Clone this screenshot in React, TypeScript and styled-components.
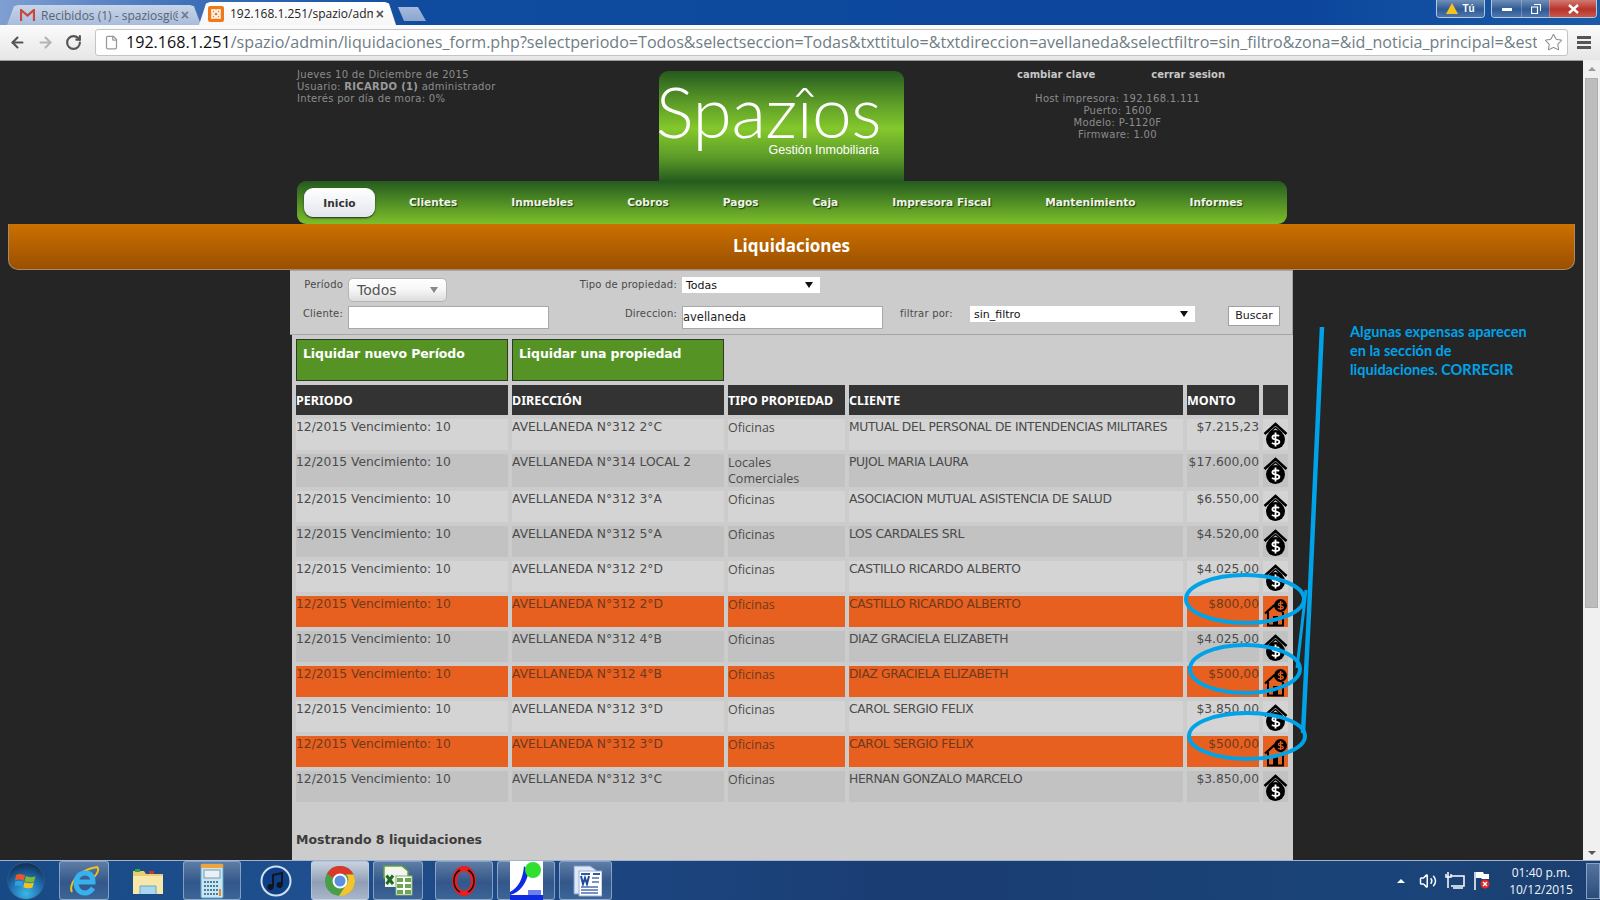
import React from "react";
import styled, { createGlobalStyle } from "styled-components";
import { ArrowLeft, ArrowRight, RotateCw, Star, File, Volume2 } from "lucide-react";

const Global = createGlobalStyle`
  html, body { margin: 0; padding: 0; background: #252525; }
  * { box-sizing: border-box; }
`;

const Screen = styled.div`
  position: relative;
  width: 1600px;
  height: 900px;
  overflow: hidden;
  display: flex;
  flex-direction: column;
  font-family: "DejaVu Sans", sans-serif;
`;

/* ---------- browser chrome ---------- */
const TabStrip = styled.div`
  height: 25px;
  flex: none;
  display: flex;
  align-items: flex-end;
  padding-left: 7px;
  background: linear-gradient(90deg, #7f9fd2 0, #3f70b8 190px, #0f4b9f 420px, #0b469c 1300px, #1a5aa8 100%);
`;
const Tab = styled.div<{ $active?: boolean }>`
  height: ${(p) => (p.$active ? 23 : 20)}px;
  width: ${(p) => (p.$active ? 197 : 194)}px;
  margin-right: ${(p) => (p.$active ? 2 : -2)}px;
  padding: 0 12px 0 ${(p) => (p.$active ? 9 : 13)}px;
  display: flex;
  align-items: center;
  gap: 3px;
  font: 12px "Open Sans", sans-serif;
  color: ${(p) => (p.$active ? "#222" : "#5a6470")};
  background: ${(p) => (p.$active ? "linear-gradient(#ffffff,#f6f6f6)" : "linear-gradient(#c8d5ea,#a9bcdb)")};
  clip-path: polygon(0 100%, 7px 6%, 11px 0, calc(100% - 11px) 0, calc(100% - 7px) 6%, 100% 100%);
`;
const TabTitle = styled.span`
  flex: 1;
  white-space: nowrap;
  overflow: hidden;
  margin-left: 3px;
`;
const TabClose = styled.span<{ $active?: boolean }>`
  font: bold 14px "Liberation Sans", sans-serif;
  color: ${(p) => (p.$active ? "#555" : "#6f7a8a")};
`;
const NewTab = styled.div`
  width: 28px;
  height: 14px;
  margin: 0 0 4px 0;
  background: linear-gradient(#a6bbdc, #8ba6cf);
  clip-path: polygon(0 0, 20px 0, 100% 100%, 6px 100%);
`;
const Spacer = styled.div`
  flex: 1;
`;
const WinGroup = styled.div`
  align-self: flex-start;
  height: 18px;
  display: flex;
  border: 1px solid #b8c8dc;
  border-top: 0;
  border-radius: 0 0 4px 4px;
  overflow: hidden;
  margin-right: ${(p: { $mr: number }) => p.$mr}px;
`;
const WinBtn = styled.div<{ $w: number; $close?: boolean }>`
  width: ${(p) => p.$w}px;
  display: flex;
  align-items: center;
  justify-content: center;
  gap: 4px;
  color: #fff;
  font: bold 10px "Liberation Sans", sans-serif;
  background: ${(p) =>
    p.$close ? "linear-gradient(#d27a72,#b8332a 55%,#c9584f)" : "linear-gradient(#6f8fb8,#2f5a95 55%,#4c78ad)"};
  border-left: 1px solid rgba(255, 255, 255, 0.25);
  &:first-child { border-left: 0; }
`;
const Toolbar = styled.div`
  height: 35px;
  flex: none;
  display: flex;
  align-items: center;
  background: linear-gradient(#fbfbfb, #e6e6e6);
  padding: 0 0 1px 9px;
`;
const NavIcons = styled.div`
  display: flex;
  align-items: center;
  gap: 11px;
  width: 86px;
  flex: none;
`;
const Omnibox = styled.div`
  width: 1473px;
  height: 27px;
  display: flex;
  align-items: center;
  gap: 7px;
  padding: 0 4px 0 8px;
  background: #fff;
  border: 1px solid #c4c4c4;
  border-radius: 3px;
`;
const Url = styled.div`
  flex: 1;
  font: 16.1px "Open Sans", sans-serif;
  color: #6f7d85;
  white-space: nowrap;
  overflow: hidden;
`;
const UrlHost = styled.span`
  color: #111;
`;
const Hamburger = styled.div`
  margin-left: 9px;
  width: 14px;
  display: flex;
  flex-direction: column;
  gap: 2px;
  & > i { display: block; height: 3px; background: #555; }
`;

/* ---------- viewport ---------- */
const Viewport = styled.div`
  flex: 1;
  min-height: 0;
  display: flex;
`;
const Page = styled.div`
  flex: 1;
  min-width: 0;
  background: #252525;
  border-top: 1px solid #9c9c9c;
  display: flex;
  flex-direction: column;
`;
const Scrollbar = styled.div`
  width: 17px;
  flex: none;
  background: #f0f0f0;
  display: flex;
  flex-direction: column;
  align-items: center;
  padding-top: 7px;
`;
const ScrollThumb = styled.div`
  width: 13px;
  height: 530px;
  margin-top: 7px;
  background: #bdbdbd;
  border: 1px solid #aeaeae;
`;
const ScrollArrow = styled.div<{ $down?: boolean }>`
  width: 0;
  height: 0;
  border-left: 4px solid transparent;
  border-right: 4px solid transparent;
  ${(p) => (p.$down ? "border-top: 4px solid #555; margin-top: auto; margin-bottom: 5px;" : "border-bottom: 4px solid #999;")}
`;

const Header = styled.div`
  height: 120px;
  flex: none;
  margin-left: 297px;
  width: 990px;
  display: flex;
`;
const InfoLeft = styled.div`
  width: 362px;
  padding-top: 8px;
  font-size: 10px;
  line-height: 12px;
  letter-spacing: 0.3px;
  color: #8c8c8c;
  & b { color: #9a9a9a; }
`;
const Logo = styled.div`
  width: 245px;
  height: 111px;
  margin-top: 10px;
  border-radius: 9px 9px 0 0;
  background: linear-gradient(#245a1e 0, #5c9a28 28%, #84c82c 52%, #5c9a28 78%, #245a1e 100%);
  color: #fff;
  display: flex;
  flex-direction: column;
  align-items: flex-end;
  padding: 9px 25px 0 0;
`;
const LogoName = styled.div`
  font: 300 70px/62px Lato, sans-serif;
  letter-spacing: -0.5px;
  transform: scaleX(1.02);
`;
const LogoSub = styled.div`
  font: 12.5px/14px "Liberation Sans", sans-serif;
  margin-top: 1px;
`;
const InfoRight = styled.div`
  flex: 1;
  padding: 8px 0 0 44px;
  font-size: 10px;
  line-height: 12px;
  letter-spacing: 0.3px;
  color: #8c8c8c;
  text-align: center;
`;
const HeadLinks = styled.div`
  display: flex;
  justify-content: center;
  gap: 56px;
  margin: 0 0 12px 7px;
  font-weight: 700;
  color: #c8c8c8;
  letter-spacing: 0;
`;
const Nav = styled.div`
  height: 43px;
  flex: none;
  width: 990px;
  margin-left: 297px;
  padding: 7px 0 0 7px;
  display: flex;
  align-items: flex-start;
  gap: 54px;
  border-radius: 9px 9px 9px 9px;
  background: linear-gradient(#245a1e 0, #5a9826 60%, #7cbf2a 100%);
`;
const NavItem = styled.div<{ $active?: boolean }>`
  font-size: 10.6px;
  font-weight: 700;
  white-space: nowrap;
  color: ${(p) => (p.$active ? "#333" : "#eef3e6")};
  text-shadow: ${(p) => (p.$active ? "none" : "1px 1px 1px #1c3a12")};
  ${(p) =>
    p.$active
      ? `width: 71px; height: 29px; margin-right: -20px; line-height: 30px; text-align: center; border-radius: 9px;
         background: linear-gradient(#fff,#e3e6ee); box-shadow: 0 1px 2px #222;`
      : "padding-top: 8px;"}
`;
const TitleBar = styled.div`
  height: 46px;
  flex: none;
  margin: 0 8px;
  display: flex;
  align-items: center;
  justify-content: center;
  padding-bottom: 3px;
  border-radius: 0 0 10px 10px;
  border: 1px solid #a98a62;
  border-top: 0;
  background: linear-gradient(#cc7000, #9a5000);
  color: #fff;
  font: 700 17px "Open Sans", sans-serif;
`;
const FormPanel = styled.div`
  height: 65px;
  flex: none;
  width: 1003px;
  margin-left: 290px;
  padding-top: 6px;
  display: grid;
  grid-template-columns: 58px 212px 122px 218px 70px 258px 52px;
  grid-template-rows: 29px 26px;
  background: #cccccc;
  border: 1px solid #a5a5a5;
  border-width: 1px 1px 1px 0;
`;
const FieldLabel = styled.div<{ $left?: boolean }>`
  font-size: 10px;
  color: #4a4a4a;
  letter-spacing: 0.2px;
  text-align: ${(p) => (p.$left ? "left" : "right")};
  padding-right: 5px;
  padding-top: 2px;
  white-space: nowrap;
`;
const PeriodSelect = styled.div`
  width: 99px;
  height: 24px;
  margin-top: 1px;
  padding: 0 8px;
  display: flex;
  align-items: center;
  justify-content: space-between;
  font-size: 14px;
  color: #555;
  border-radius: 5px;
  border: 1px solid #b5b5b5;
  background: linear-gradient(#ffffff, #f6f6f6 50%, #dcdcdc);
`;
const Caret = styled.span<{ $color: string }>`
  width: 0;
  height: 0;
  border-left: 4px solid transparent;
  border-right: 4px solid transparent;
  border-top: 6px solid ${(p) => p.$color};
`;
const WhiteSelect = styled.div<{ $w: number }>`
  width: ${(p) => p.$w}px;
  height: 16px;
  padding: 0 7px 0 4px;
  display: flex;
  align-items: center;
  justify-content: space-between;
  font: 11px "DejaVu Sans", sans-serif;
  color: #111;
  background: #fff;
`;
const TextField = styled.div<{ $w: number }>`
  width: ${(p) => p.$w}px;
  height: 23px;
  padding: 3px 0 0 0;
  background: #fff;
  border: 1px solid #a8a8a8;
  font-size: 11.5px;
  color: #222;
`;
const SearchBtn = styled.div`
  width: 52px;
  height: 20px;
  background: #fff;
  border: 1px solid #a0a0a0;
  font: 11px/18px "DejaVu Sans", sans-serif;
  color: #222;
  text-align: center;
`;
const Content = styled.div`
  flex: 1;
  width: 1001px;
  margin-left: 292px;
  background: #cccccc;
  padding-top: 4px;
`;
const ActionRow = styled.div`
  display: flex;
  gap: 4px;
  padding-left: 4px;
`;
const ActionBtn = styled.div`
  width: 212px;
  height: 42px;
  padding: 6px 0 0 6px;
  background: #559325;
  border: 1px solid #2e3a28;
  color: #fff;
  font-size: 12.5px;
  font-weight: 700;
  letter-spacing: -0.1px;
`;
const Table = styled.table`
  width: 1000px;
  table-layout: fixed;
  border-collapse: separate;
  border-spacing: 4px;
`;
const Th = styled.th<{ $w: number }>`
  width: ${(p) => p.$w}px;
  height: 30px;
  padding: 0;
  text-align: left;
  background: #333;
  color: #fff;
  font: 700 12.5px "Noto Sans", sans-serif;
`;
const Td = styled.td<{ $tone: "a" | "b" | "o"; $right?: boolean }>`
  height: 30px;
  padding: 1px 0 0 0;
  vertical-align: top;
  overflow: visible;
  background: ${(p) => (p.$tone === "o" ? "#e8601f" : p.$tone === "a" ? "#d4d4d4" : "#c2c2c2")};
  color: ${(p) => (p.$tone === "o" ? "#6e3a1e" : "#4b4b4b")};
  font-size: 12.3px;
  line-height: 15px;
  text-align: ${(p) => (p.$right ? "right" : "left")};
  white-space: ${(p) => (p.$right ? "nowrap" : "normal")};
`;
const CellText = styled.span<{ $narrow?: boolean }>`
  letter-spacing: ${(p) => (p.$narrow ? "-0.35px" : "0")};
  white-space: ${(p) => (p.$narrow ? "nowrap" : "normal")};
`;
const TipoText = styled.span`
  font-family: "Open Sans", sans-serif;
  font-size: 12.5px;
`;
const IconWrap = styled.div`
  display: block;
  width: 25px;
  height: 30px;
  position: relative;
`;
const Footer = styled.div`
  margin: 26px 0 0 4px;
  font-size: 12.5px;
  font-weight: 700;
  color: #3c3c3c;
`;
const Note = styled.div`
  position: absolute;
  left: 1350px;
  top: 322px;
  width: 210px;
  font: 700 14.5px/19px Lato, sans-serif;
  color: #00a2e8;
`;
const Overlay = styled.svg`
  position: absolute;
  left: 0;
  top: 0;
  pointer-events: none;
`;

/* ---------- taskbar ---------- */
const Taskbar = styled.div`
  height: 40px;
  flex: none;
  display: flex;
  align-items: stretch;
  padding-left: 4px;
  border-top: 1px solid #9fb4d0;
  background: linear-gradient(90deg, #174a85 0, #1f4f8e 300px, #1a3d73 900px, #1a4479 1400px, #1c3f70 100%);
`;
const Orb = styled.div`
  width: 38px;
  height: 38px;
  margin: 1px 14px 0 3px;
  border-radius: 50%;
  background: radial-gradient(circle at 50% 85%, #39b6e8, #1f6fb0 45%, #12355f 80%);
  border: 1px solid #33557f;
  display: flex;
  align-items: center;
  justify-content: center;
`;
const TaskBtn = styled.div<{ $w: number; $plain?: boolean; $hot?: boolean; $gap?: number }>`
  width: ${(p) => p.$w}px;
  margin-right: ${(p) => p.$gap ?? 4}px;
  display: flex;
  align-items: center;
  justify-content: center;
  border-radius: 3px;
  ${(p) =>
    p.$plain
      ? ""
      : `border: 1px solid rgba(190,210,235,.55);
         background: linear-gradient(${p.$hot ? "#c9d3df,#8f9fb5 55%,#aab6c8" : "#5f7da5,#33578a 55%,#3c6598"});`}
`;
const Tray = styled.div`
  margin-left: auto;
  display: flex;
  align-items: center;
  color: #fff;
`;
const TrayCaret = styled.span`
  width: 0;
  height: 0;
  margin-right: 14px;
  border-left: 4px solid transparent;
  border-right: 4px solid transparent;
  border-bottom: 4px solid #fff;
`;
const TrayIcons = styled.div`
  display: flex;
  align-items: center;
  gap: 8px;
`;
const Clock = styled.div`
  width: 72px;
  margin-left: 14px;
  text-align: center;
  font: 12px/17px "Open Sans", sans-serif;
  color: #f2f5fa;
`;
const ShowDesktop = styled.div`
  width: 14px;
  height: 36px;
  margin-left: 9px;
  border: 1px solid #8aa2c2;
  background: linear-gradient(#54749e, #2c4d7c);
`;

/* ---------- drawings ---------- */
const DollarHouse = () => (
  <svg width="25" height="34" viewBox="0 0 25 34" style={{ position: "absolute", left: 0, top: 1 }}>
    <path d="M1.5 13 12.5 3 23.5 13" fill="none" stroke="#000" strokeWidth="2.6" />
    <path d="M6 12 12.5 6.5 19 12" fill="none" stroke="#000" strokeWidth="1.4" />
    <circle cx="12.5" cy="18.5" r="9.5" fill="#000" />
    <path d="M16 15.2c-1-1.4-6.6-1.7-6.6 1.2 0 3 7 1.4 7 4.4 0 2.9-6 2.7-7.4 1M12.5 11.5v14" fill="none" stroke="#fff" strokeWidth="1.8" />
  </svg>
);
const CoinHouse = () => (
  <svg width="25" height="30" viewBox="0 0 25 30" style={{ position: "absolute", left: 0, top: 1 }}>
    <path d="M2 15.5 11 7.5 19 14" fill="none" stroke="#000" strokeWidth="2.2" />
    <path d="M5 14v13.5h15V14" fill="none" stroke="#000" strokeWidth="2" />
    <rect x="10" y="18" width="5" height="9.5" fill="#000" />
    <circle cx="17.5" cy="7.5" r="6.5" fill="#000" />
    <path d="M20 5.6c-.8-1-4.6-1.1-4.6.8 0 2 4.9.9 4.9 3 0 1.9-4.2 1.8-5.2.7M17.6 3v9" fill="none" stroke="#e8601f" strokeWidth="1.3" />
  </svg>
);
const GmailIcon = () => (
  <svg width="15" height="12" viewBox="0 0 15 12">
    <path d="M1 12V1l6.5 5.5L14 1v11" fill="none" stroke="#c9463a" strokeWidth="2.2" />
  </svg>
);
const XamppIcon = () => (
  <svg width="16" height="16" viewBox="0 0 16 16">
    <rect width="16" height="16" rx="2" fill="#ee7a1c" />
    <path d="M4 4h3v2h2V4h3v3h-2v2h2v3H9v-2H7v2H4V9h2V7H4z" fill="none" stroke="#fff" strokeWidth="1.5" />
  </svg>
);
const WinFlag = () => (
  <svg width="22" height="20" viewBox="0 0 22 20">
    <path d="M1 4c3-1.5 5-1.2 9 .5l-1.4 5.3C5 8.3 3 8 0 9.4z" fill="#e8562a" />
    <path d="M11 5c3.5 1.6 6 1.6 9.5.2l-1.4 5.2c-3.4 1.3-6 1.2-9.5-.2z" fill="#7fbb2e" />
    <path d="M8.300 10.800c-3.500-1.400-5.500-1.500-8.300-.2L-1 15.500c3-1.300 5-1.200 8 .2z" fill="#2f9fe0" />
    <path d="M9.500 11.200c3.500 1.400 6 1.500 9.300.2l-1.300 5c-3.300 1.300-5.800 1.200-9.300-.2z" fill="#f6c120" />
  </svg>
);
const IeIcon = () => (
  <svg width="34" height="34" viewBox="0 0 34 34">
    <path d="M5 28C1 22 10 6 30 3c3 3-1 8-3 10" fill="none" stroke="#f2c21c" strokeWidth="2" />
    <path d="M9 18h17c0-6-3-9-8-9s-9 4-9 10 4 10 9 10c4 0 6-2 8-5" fill="none" stroke="#38b2ee" strokeWidth="5" />
  </svg>
);
const FolderIcon = () => (
  <svg width="34" height="34" viewBox="0 0 34 34">
    <path d="M2 7h11l2 3h17v20H2z" fill="#e9cd74" />
    <path d="M2 12h30v18H2z" fill="#f7e7a8" />
    <rect x="4" y="5" width="5" height="3" fill="#36a83a" />
    <rect x="18" y="7" width="5" height="3" fill="#c8372b" />
    <path d="M9 30v-8h16v8" fill="#a9d8ee" stroke="#6aa7c7" />
  </svg>
);
const CalcIcon = () => (
  <svg width="24" height="36" viewBox="0 0 24 36">
    <rect x="1" y="1" width="22" height="34" rx="1.500" fill="#c9e6f5" stroke="#5aa4cb" />
    <rect x="1" y="1" width="22" height="4" fill="#f0a33a" />
    <rect x="4" y="7" width="16" height="8" fill="#e8f1f6" stroke="#7d97a8" />
    <path d="M4 19h14M4 23h14M4 27h14M4 31h14" stroke="#4e7d98" strokeWidth="2" strokeDasharray="2 1" />
    <rect x="19" y="26" width="2" height="7" fill="#e98b22" />
  </svg>
);
const ItunesIcon = () => (
  <svg width="32" height="32" viewBox="0 0 32 32">
    <circle cx="16" cy="16" r="14.500" fill="#0f3f86" stroke="#cfe0f2" strokeWidth="2" />
    <path d="M13 22V10l9-2v12" fill="none" stroke="#10151f" strokeWidth="2" />
    <circle cx="10.500" cy="22" r="3" fill="#10151f" />
    <circle cx="19.500" cy="20" r="3" fill="#10151f" />
  </svg>
);
const ChromeIcon = () => (
  <svg width="32" height="32" viewBox="0 0 32 32">
    <circle cx="16" cy="16" r="15" fill="#4a9e4a" />
    <path d="M3 8.500A15 15 0 0 1 29.500 9.500H16A7 7 0 0 0 9.500 13z" fill="#d8392c" />
    <path d="M29.500 9.500A15 15 0 0 1 15 31l7-11a7 7 0 0 0 0-10.500z" fill="#f4c430" />
    <circle cx="16" cy="16" r="7.500" fill="#fff" />
    <circle cx="16" cy="16" r="5.500" fill="#5b8fe0" />
  </svg>
);
const ExcelIcon = () => (
  <svg width="32" height="32" viewBox="0 0 32 32">
    <path d="M2 1h18l6 5v7H2z" fill="#f4f7f0" stroke="#5fa53a" strokeWidth="1.500" />
    <path d="M3 9h11v13H3z" fill="#eef3e8" />
    <path d="M4.500 10.500 11 19M11 10.500 4.500 19" stroke="#1e6a24" strokeWidth="3" />
    <rect x="14" y="11" width="16" height="19" fill="#fff" stroke="#87ab77" />
    <path d="M15 13h6v4h-6zM23 13h6v4h-6zM15 19h6v4h-6zM23 19h6v4h-6zM15 25h6v4h-6zM23 25h6v4h-6z" fill="#6aa84f" />
  </svg>
);
const OperaIcon = () => (
  <svg width="26" height="32" viewBox="0 0 26 32">
    <ellipse cx="13" cy="16" rx="9.500" ry="12.500" fill="none" stroke="#ee1c1c" strokeWidth="5" />
    <path d="M17 5c4 2 6 6 6 11s-2 9-6 11" fill="none" stroke="#111" strokeWidth="1.500" />
    <path d="M9 5C5 7 3 11 3 16s2 9 6 11" fill="none" stroke="#111" strokeWidth="1.500" />
  </svg>
);
const AppIcon = () => (
  <svg width="33" height="40" viewBox="0 0 33 40">
    <rect width="33" height="39" fill="#fff" />
    <path d="M14 5C13 18 8 27 0 31v3c10-2 17-13 19-24z" fill="#0d2be0" />
    <circle cx="23" cy="9" r="8" fill="#2fe02f" />
    <rect x="0" y="34" width="33" height="5" fill="#0d2be0" />
    <rect x="18" y="29" width="13" height="5" fill="#0d2be0" opacity="0.6" />
  </svg>
);
const WordIcon = () => (
  <svg width="32" height="32" viewBox="0 0 32 32">
    <path d="M4 1h16l6 4v24H4z" fill="#dfe8f6" stroke="#7b9bd0" />
    <path d="M9 6h23v25H9z" fill="#fff" stroke="#9aaed0" />
    <path d="M11 9h9M23 9h7" stroke="#2f5aa8" strokeWidth="2" />
    <path d="M11 11l2 8 2-6 2 6 2-8" fill="none" stroke="#1c4a9c" strokeWidth="2" />
    <path d="M11 22h17M11 25h17M11 28h17M22 13h7M22 17h7" stroke="#4a6fb5" strokeWidth="1.500" />
  </svg>
);
const NetIcon = () => (
  <svg width="20" height="18" viewBox="0 0 20 18">
    <path d="M6 4h13v10H6M3 0v8M1 2v3h5V2M3 8v8M8 16h10" fill="none" stroke="#fff" strokeWidth="1.500" />
  </svg>
);
const FlagIcon = () => (
  <svg width="18" height="20" viewBox="0 0 18 20">
    <path d="M2 1v18" stroke="#fff" strokeWidth="1.500" />
    <path d="M3 1h7l1 2h5v5H9L8 7H3z" fill="#fff" />
    <circle cx="12" cy="13" r="4.500" fill="#e02828" />
    <path d="M10 11l4 4M14 11l-4 4" stroke="#fff" strokeWidth="1.300" />
  </svg>
);

type Row = { dir: string; tipo: string; cli: string; monto: string; tone: "a" | "b" | "o" };
const rows: Row[] = [
  { dir: "AVELLANEDA N°312 2°C", tipo: "Oficinas", cli: "MUTUAL DEL PERSONAL DE INTENDENCIAS MILITARES", monto: "$7.215,23", tone: "a" },
  { dir: "AVELLANEDA N°314 LOCAL 2", tipo: "Locales Comerciales", cli: "PUJOL MARIA LAURA", monto: "$17.600,00", tone: "b" },
  { dir: "AVELLANEDA N°312 3°A", tipo: "Oficinas", cli: "ASOCIACION MUTUAL ASISTENCIA DE SALUD", monto: "$6.550,00", tone: "a" },
  { dir: "AVELLANEDA N°312 5°A", tipo: "Oficinas", cli: "LOS CARDALES SRL", monto: "$4.520,00", tone: "b" },
  { dir: "AVELLANEDA N°312 2°D", tipo: "Oficinas", cli: "CASTILLO RICARDO ALBERTO", monto: "$4.025,00", tone: "a" },
  { dir: "AVELLANEDA N°312 2°D", tipo: "Oficinas", cli: "CASTILLO RICARDO ALBERTO", monto: "$800,00", tone: "o" },
  { dir: "AVELLANEDA N°312 4°B", tipo: "Oficinas", cli: "DIAZ GRACIELA ELIZABETH", monto: "$4.025,00", tone: "b" },
  { dir: "AVELLANEDA N°312 4°B", tipo: "Oficinas", cli: "DIAZ GRACIELA ELIZABETH", monto: "$500,00", tone: "o" },
  { dir: "AVELLANEDA N°312 3°D", tipo: "Oficinas", cli: "CAROL SERGIO FELIX", monto: "$3.850,00", tone: "a" },
  { dir: "AVELLANEDA N°312 3°D", tipo: "Oficinas", cli: "CAROL SERGIO FELIX", monto: "$500,00", tone: "o" },
  { dir: "AVELLANEDA N°312 3°C", tipo: "Oficinas", cli: "HERNAN GONZALO MARCELO", monto: "$3.850,00", tone: "b" },
];
const navItems = ["Clientes", "Inmuebles", "Cobros", "Pagos", "Caja", "Impresora Fiscal", "Mantenimiento", "Informes"];

export default function App() {
  return (
    <Screen>
      <Global />
      <TabStrip>
        <Tab>
          <GmailIcon />
          <TabTitle>Recibidos (1) - spaziosgi@</TabTitle>
          <TabClose>×</TabClose>
        </Tab>
        <Tab $active>
          <XamppIcon />
          <TabTitle>192.168.1.251/spazio/adm</TabTitle>
          <TabClose $active>×</TabClose>
        </Tab>
        <NewTab />
        <Spacer />
        <WinGroup $mr={6}>
          <WinBtn $w={47}>
            <svg width="12" height="11" viewBox="0 0 12 11"><path d="M6 0l6 11H0z" fill="#f7c21b" /></svg>
            Tú
          </WinBtn>
        </WinGroup>
        <WinGroup $mr={3}>
          <WinBtn $w={29}><svg width="10" height="4"><rect width="10" height="3" y="1" fill="#fff" /></svg></WinBtn>
          <WinBtn $w={28}><svg width="10" height="10"><path d="M3 .5h6.500V7M.5 3h6v6.500h-6z" fill="none" stroke="#fff" strokeWidth="1.200" /></svg></WinBtn>
          <WinBtn $w={47} $close>
            <svg width="11" height="10"><path d="M1 1l9 8M10 1l-9 8" stroke="#fff" strokeWidth="2.400" /></svg>
          </WinBtn>
        </WinGroup>
      </TabStrip>
      <Toolbar>
        <NavIcons>
          <ArrowLeft size={17} color="#555" strokeWidth={3} />
          <ArrowRight size={17} color="#b4b4b4" strokeWidth={3} />
          <RotateCw size={17} color="#555" strokeWidth={3} />
        </NavIcons>
        <Omnibox>
          <File size={15} color="#999" />
          <Url>
            <UrlHost>192.168.1.251</UrlHost>
            /spazio/admin/liquidaciones_form.php?selectperiodo=Todos&amp;selectseccion=Todas&amp;txttitulo=&amp;txtdireccion=avellaneda&amp;selectfiltro=sin_filtro&amp;zona=&amp;id_noticia_principal=&amp;estilo=
          </Url>
          <Star size={19} color="#8a8a8a" strokeWidth={1.3} />
        </Omnibox>
        <Hamburger><i /><i /><i /></Hamburger>
      </Toolbar>
      <Viewport>
        <Page>
          <Header>
            <InfoLeft>
              Jueves 10 de Diciembre de 2015
              <br />
              Usuario: <b>RICARDO (1)</b> administrador
              <br />
              Interés por día de mora: 0%
            </InfoLeft>
            <Logo>
              <LogoName>Spazîos</LogoName>
              <LogoSub>Gestión Inmobiliaria</LogoSub>
            </Logo>
            <InfoRight>
              <HeadLinks>
                <span>cambiar clave</span>
                <span>cerrar sesion</span>
              </HeadLinks>
              Host impresora: 192.168.1.111
              <br />
              Puerto: 1600
              <br />
              Modelo: P-1120F
              <br />
              Firmware: 1.00
            </InfoRight>
          </Header>
          <Nav>
            <NavItem $active>Inicio</NavItem>
            {navItems.map((n) => (
              <NavItem key={n}>{n}</NavItem>
            ))}
          </Nav>
          <TitleBar>Liquidaciones</TitleBar>
          <FormPanel>
            <FieldLabel>Período</FieldLabel>
            <PeriodSelect>Todos<Caret $color="#888" /></PeriodSelect>
            <FieldLabel>Tipo de propiedad:</FieldLabel>
            <WhiteSelect $w={138}>Todas<Caret $color="#111" /></WhiteSelect>
            <div />
            <div />
            <div />
            <FieldLabel>Cliente:</FieldLabel>
            <TextField $w={201} />
            <FieldLabel>Direccion:</FieldLabel>
            <TextField $w={201}>avellaneda</TextField>
            <FieldLabel $left>filtrar por:</FieldLabel>
            <WhiteSelect $w={225}>sin_filtro<Caret $color="#111" /></WhiteSelect>
            <SearchBtn>Buscar</SearchBtn>
          </FormPanel>
          <Content>
            <ActionRow>
              <ActionBtn>Liquidar nuevo Período</ActionBtn>
              <ActionBtn>Liquidar una propiedad</ActionBtn>
            </ActionRow>
            <Table>
              <thead>
                <tr>
                  <Th $w={212}>PERIODO</Th>
                  <Th $w={212}>DIRECCIÓN</Th>
                  <Th $w={117}>TIPO PROPIEDAD</Th>
                  <Th $w={334}>CLIENTE</Th>
                  <Th $w={72}>MONTO</Th>
                  <Th $w={25}></Th>
                </tr>
              </thead>
              <tbody>
                {rows.map((r, i) => (
                  <tr key={i}>
                    <Td $tone={r.tone}>12/2015 Vencimiento: 10</Td>
                    <Td $tone={r.tone}>{r.dir}</Td>
                    <Td $tone={r.tone}><TipoText>{r.tipo}</TipoText></Td>
                    <Td $tone={r.tone}><CellText $narrow>{r.cli}</CellText></Td>
                    <Td $tone={r.tone} $right>{r.monto}</Td>
                    <Td $tone={r.tone}>
                      <IconWrap>{r.tone === "o" ? <CoinHouse /> : <DollarHouse />}</IconWrap>
                    </Td>
                  </tr>
                ))}
              </tbody>
            </Table>
            <Footer>Mostrando 8 liquidaciones</Footer>
          </Content>
        </Page>
        <Scrollbar>
          <ScrollArrow />
          <ScrollThumb />
          <ScrollArrow $down />
        </Scrollbar>
      </Viewport>
      <Taskbar>
        <Orb><WinFlag /></Orb>
        <TaskBtn $w={50} $gap={8}><IeIcon /></TaskBtn>
        <TaskBtn $w={62} $plain $gap={4}><FolderIcon /></TaskBtn>
        <TaskBtn $w={58} $gap={4}><CalcIcon /></TaskBtn>
        <TaskBtn $w={62} $plain $gap={4}><ItunesIcon /></TaskBtn>
        <TaskBtn $w={58} $hot $gap={4}><ChromeIcon /></TaskBtn>
        <TaskBtn $w={50} $gap={12}><ExcelIcon /></TaskBtn>
        <TaskBtn $w={58} $gap={4}><OperaIcon /></TaskBtn>
        <TaskBtn $w={58} $gap={4}><AppIcon /></TaskBtn>
        <TaskBtn $w={53}><WordIcon /></TaskBtn>
        <Tray>
          <TrayCaret />
          <TrayIcons>
            <Volume2 size={18} color="#fff" />
            <NetIcon />
            <FlagIcon />
          </TrayIcons>
          <Clock>
            01:40 p.m.
            <br />
            10/12/2015
          </Clock>
          <ShowDesktop />
        </Tray>
      </Taskbar>
      <Note>
        Algunas expensas aparecen
        <br />
        en la sección de
        <br />
        liquidaciones. CORREGIR
      </Note>
      <Overlay width="1600" height="900" viewBox="0 0 1600 900">
        <g fill="none" stroke="#00a2e8" strokeWidth="4">
          <ellipse cx="1245" cy="599" rx="59" ry="24" />
          <ellipse cx="1245" cy="669" rx="55" ry="24" />
          <ellipse cx="1247" cy="736" rx="58" ry="23" />
          <path d="M1322 327 1309 612 1303 733" strokeWidth="4.500" />
          <path d="M1306 590 1297 668" strokeWidth="3" />
        </g>
      </Overlay>
    </Screen>
  );
}
